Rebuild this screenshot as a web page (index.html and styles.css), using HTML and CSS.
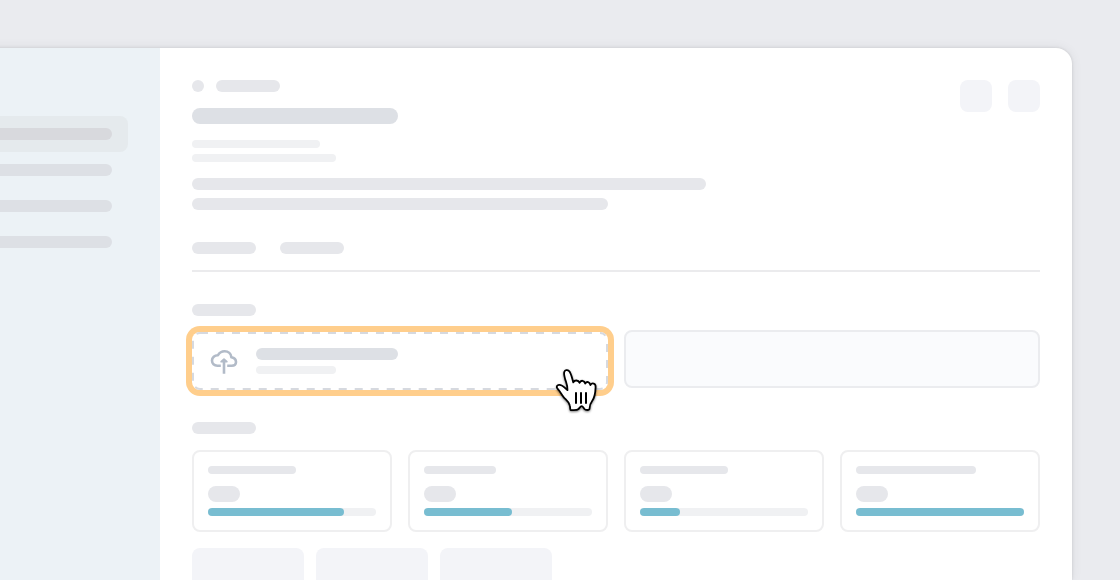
FILE: index.html
```html
<!DOCTYPE html>
<html lang="en">
<head>
<meta charset="utf-8">
<title>Upload</title>
<link rel="stylesheet" href="styles.css">
</head>
<body>
<div class="window">
  <aside class="sidebar">
    <div class="nav-item active"><span class="nav-bar"></span></div>
    <div class="nav-item"><span class="nav-bar"></span></div>
    <div class="nav-item"><span class="nav-bar"></span></div>
    <div class="nav-item"><span class="nav-bar"></span></div>
  </aside>
  <main class="content">
    <header class="header">
      <div class="intro">
        <div class="crumbs"><span class="bar dot"></span><span class="bar w64"></span></div>
        <div class="bar title"></div>
        <div class="bar light w128"></div>
        <div class="bar light w144"></div>
        <div class="bar para-one"></div>
        <div class="bar para-two"></div>
      </div>
      <div class="actions"><span class="action"></span><span class="action"></span></div>
    </header>
    <nav class="tabs"><span class="bar w64"></span><span class="bar w64"></span></nav>
    <div class="bar w64 upload-label"></div>
    <section class="upload-row">
      <div class="dropzone">
        <svg class="dashes" width="416" height="58" viewBox="0 0 416 58">
          <path d="M8 1H408A7 7 0 0 1 413.5 3.7M415 12V50A7 7 0 0 1 413.5 54M410.67 56.5L408 57H8A7 7 0 0 1 1 50M1 48.7V8A7 7 0 0 1 8 1"/>
        </svg>
        <svg class="cloud" width="28" height="28" viewBox="0 0 28 28">
          <path d="M10.8 17.7H7.4C4.2 17.7 2 15.6 2 12.6C2 9.4 4.6 7.1 8 7.2C9.4 4.8 11.7 3.3 14.6 3.3C18.4 3.3 21.1 5.9 21.4 9.3C24.3 9.9 26 11.5 26 13.9C26 16.2 24.2 17.7 21.6 17.7H17.2M14 25.7V12"/>
          <path class="arrowhead" d="M11.2 13.7L14 11.2L16.8 13.7Z"/>
        </svg>
        <div class="drop-text"><div class="bar drop-title"></div><div class="bar light w80"></div></div>
        <svg class="cursor" width="48" height="52" viewBox="0 0 48 52">
          <path class="hand" d="M17.7 41.2C16.8 37.8 14.2 36 12 33.6C9.8 31.2 8.6 28.2 5.9 25.2C3.9 23 4.7 21.2 7 20.9C10.2 20.6 12.3 23.3 15.5 26.1C15.9 22.2 14.2 18.7 13.1 14.9C12.3 12 11.6 9.6 12.3 7.9C13 6 15.4 5.6 17.1 7.1C19.2 9 20 14.2 21.3 18.4C22.5 15.9 26.3 15.7 27.5 18.8C28.9 15.7 32.4 16.3 33.2 19.6C34.7 16.9 37.7 17.7 38.4 21.1C40 18.4 43.8 19.1 43.6 23.1C43.4 29 43.2 33.2 40 37.2C38.3 39.3 37.6 41.6 37.5 44.8C37.4 46.5 33.4 46.2 32.4 45C31.4 43.8 30.8 42.1 29.7 42.1C28.5 42.1 27.7 43.8 26.6 45C25 46.5 21.3 46.3 18.6 46C17.9 45.9 18.5 43.3 17.7 41.2Z"/>
          <path class="lines" d="M24 29V39M29 29V39M34 29V39"/>
        </svg>
      </div>
      <div class="empty-zone"></div>
    </section>
    <div class="bar w64 cards-label"></div>
    <section class="cards">
      <article class="card"><span class="bar small w88"></span><span class="bar badge"></span><div class="track"><div class="fill" style="width:136px"></div></div></article>
      <article class="card"><span class="bar small w72"></span><span class="bar badge"></span><div class="track"><div class="fill" style="width:88px"></div></div></article>
      <article class="card"><span class="bar small w88"></span><span class="bar badge"></span><div class="track"><div class="fill" style="width:40px"></div></div></article>
      <article class="card"><span class="bar small w120"></span><span class="bar badge"></span><div class="track"><div class="fill" style="width:168px"></div></div></article>
    </section>
    <section class="tiles"><span class="tile"></span><span class="tile"></span><span class="tile"></span></section>
  </main>
</div>
</body>
</html>
```
FILE: styles.css
```css
* { box-sizing: border-box; }
html, body { margin: 0; height: 100%; }
body {
  padding-top: 48px;
  overflow: hidden;
  background: #eaebef;
}
.window {
  display: flex;
  width: 1088px;
  height: 532px;
  margin-left: -16px;
  background: #fff;
  border-radius: 0 16px 0 0;
  box-shadow: 0 0 3px rgba(0, 0, 0, .12), 0 0 12px rgba(0, 0, 0, .07);
}
.sidebar {
  flex: none;
  width: 176px;
  padding-top: 68px;
  background: #ecf2f6;
}
.nav-item {
  display: flex;
  align-items: center;
  width: 144px;
  height: 36px;
  border-radius: 0 8px 8px 0;
}
.nav-item.active { background: #e5eaed; }
.nav-bar {
  width: 128px;
  height: 12px;
  border-radius: 0 6px 6px 0;
  background: #dde0e5;
}
.active .nav-bar { background: #d8d9dd; }
.content {
  flex: 1;
  padding: 32px 32px 0;
}
.bar {
  display: block;
  height: 12px;
  border-radius: 8px;
  background: #e6e7eb;
}
.light { height: 8px; background: #f0f1f3; }
.small { height: 8px; }
.w64 { width: 64px; }
.w72 { width: 72px; }
.w80 { width: 80px; }
.w88 { width: 88px; }
.w120 { width: 120px; }
.w128 { width: 128px; }
.w144 { width: 144px; margin-top: 6px; }
.header { display: flex; justify-content: space-between; }
.crumbs { display: flex; gap: 12px; }
.dot { width: 12px; }
.title {
  width: 206px;
  height: 16px;
  margin: 16px 0;
  background: #dde0e5;
}
.para-one { width: 514px; margin-top: 16px; }
.para-two { width: 416px; margin-top: 8px; }
.actions { display: flex; gap: 16px; }
.action {
  width: 32px;
  height: 32px;
  border-radius: 8px;
  background: #f3f4f8;
}
.tabs {
  display: flex;
  gap: 24px;
  margin-top: 32px;
  padding-bottom: 16px;
  border-bottom: 2px solid #ebebed;
}
.upload-label { margin-top: 32px; }
.upload-row {
  display: flex;
  align-items: flex-start;
  gap: 16px;
  margin-top: 14px;
}
.dropzone {
  position: relative;
  display: flex;
  width: 416px;
  height: 58px;
  margin-top: 2px;
  padding: 16px 18px;
  gap: 18px;
  border-radius: 8px;
  box-shadow: 0 0 0 6px #ffce8c;
}
.dashes { position: absolute; inset: 0; }
.dashes path {
  fill: none;
  stroke: #d6d9df;
  stroke-width: 2;
  stroke-dasharray: 8 8;
}
.cloud { flex: none; }
.cloud path {
  fill: none;
  stroke: #b2bbc8;
  stroke-width: 2.6;
  stroke-linejoin: round;
}
.cloud .arrowhead { fill: #b2bbc8; stroke-width: 1.8; }
.drop-title { width: 142px; margin-bottom: 6px; background: #dde0e5; }
.cursor {
  position: absolute;
  left: 360px;
  top: 32px;
  filter: drop-shadow(0 1px 1px rgba(0, 0, 0, .5));
}
.hand {
  fill: #fff;
  stroke: #000;
  stroke-width: 1.8;
  stroke-linejoin: round;
}
.lines { fill: none; stroke: #000; stroke-width: 2; stroke-linecap: round; }
.empty-zone {
  width: 416px;
  height: 58px;
  border: 2px solid #ebecef;
  border-radius: 8px;
  background: #fafbfd;
}
.cards-label { margin-top: 32px; }
.cards {
  display: grid;
  grid-template-columns: repeat(4, 200px);
  gap: 16px;
  margin-top: 16px;
}
.card {
  height: 82px;
  padding: 14px;
  border: 2px solid #efeff0;
  border-radius: 8px;
}
.badge { width: 32px; height: 16px; margin: 12px 0 6px; }
.track { height: 8px; border-radius: 4px; background: #f0f1f3; }
.fill { height: 8px; border-radius: 4px; background: #78bdd1; }
.tiles { display: flex; gap: 12px; margin-top: 16px; }
.tile {
  width: 112px;
  height: 32px;
  border-radius: 8px 8px 0 0;
  background: #f3f4f8;
}
```
